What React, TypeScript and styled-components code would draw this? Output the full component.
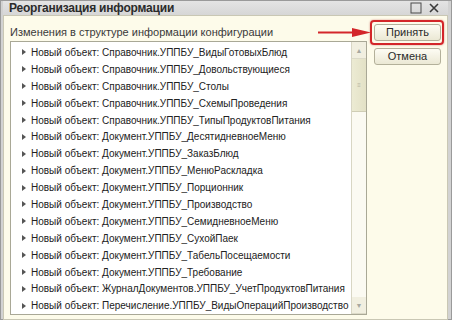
import * as React from 'react';
import styled, { createGlobalStyle } from 'styled-components';

const GlobalStyle = createGlobalStyle`
  html, body {
    margin: 0;
    padding: 0;
    background: #ffffff;
  }
  body {
    font-family: "Liberation Sans", Arial, sans-serif;
  }
`;

const items = [
  'Справочник.УППБУ_ВидыГотовыхБлюд',
  'Справочник.УППБУ_Довольствующиеся',
  'Справочник.УППБУ_Столы',
  'Справочник.УППБУ_СхемыПроведения',
  'Справочник.УППБУ_ТипыПродуктовПитания',
  'Документ.УППБУ_ДесятидневноеМеню',
  'Документ.УППБУ_ЗаказБлюд',
  'Документ.УППБУ_МенюРаскладка',
  'Документ.УППБУ_Порционник',
  'Документ.УППБУ_Производство',
  'Документ.УППБУ_СемидневноеМеню',
  'Документ.УППБУ_СухойПаек',
  'Документ.УППБУ_ТабельПосещаемости',
  'Документ.УППБУ_Требование',
  'ЖурналДокументов.УППБУ_УчетПродуктовПитания',
  'Перечисление.УППБУ_ВидыОперацийПроизводство',
];

const Window = styled.div`
  width: 452px;
  height: 320px;
  box-sizing: border-box;
  display: flex;
  flex-direction: column;
  background: #d2d2d2;
  border: 1px solid #9a9a9a;
  padding: 0 3px 5px 2px;
`;

const TitleBar = styled.div`
  height: 21px;
  display: flex;
  align-items: center;
  padding: 0 8px 0 6px;
  background: linear-gradient(#e4e4e4, #d6d6d6);
`;

const Title = styled.div`
  flex: 1;
  font-size: 12px;
  font-weight: bold;
  color: #2b2b2b;
  letter-spacing: -0.2px;
`;

const TitleIcons = styled.div`
  display: flex;
  gap: 6px;
  align-items: center;
`;

const Body = styled.div`
  flex: 1;
  display: flex;
  background: #fdfbea;
  border: 1px solid #c9c7b4;
  padding: 9px 6px 4px 6px;
  gap: 7px;
`;

const Main = styled.div`
  width: 358px;
  display: flex;
  flex-direction: column;
`;

const Caption = styled.div`
  font-size: 11px;
  color: #3a3a3a;
  height: 14px;
  line-height: 14px;
  margin-bottom: 2px;
`;

const ListBox = styled.div`
  flex: 1;
  display: flex;
  background: #ffffff;
  border: 1px solid #a9a896;
  overflow: hidden;
`;

const Rows = styled.div`
  flex: 1;
  min-width: 0;
  overflow: hidden;
  padding-top: 2px;
`;

const Row = styled.div`
  height: 16.9px;
  display: flex;
  align-items: center;
  padding-left: 11px;
  font-size: 10px;
  color: #222;
  white-space: nowrap;
`;

const Marker = styled.span`
  flex: none;
  width: 0;
  height: 0;
  border-top: 3px solid transparent;
  border-bottom: 3px solid transparent;
  border-left: 4px solid #555;
  margin-right: 5px;
`;

const ScrollBar = styled.div`
  width: 14px;
  display: flex;
  flex-direction: column;
  border-left: 1px solid #d8d6c4;
  background: #fbfaf2;
`;

const ScrollButton = styled.div`
  height: 16px;
  display: flex;
  align-items: center;
  justify-content: center;
  background: #f1efe0;
  border-bottom: 1px solid #dcdac8;
  font-size: 7px;
  color: #a8a8a0;
`;

const Thumb = styled.div`
  height: 52px;
  display: flex;
  align-items: center;
  justify-content: center;
  background: linear-gradient(90deg, #ecebd3, #e3e1c6);
  border-bottom: 1px solid #cfcdb5;
  font-size: 6px;
  color: #b5b39e;
`;

const Track = styled.div`
  flex: 1;
`;

const Side = styled.div`
  display: flex;
  flex-direction: column;
  gap: 7px;
  margin-top: -1px;
`;

const ButtonWrap = styled.div`
  position: relative;
`;

const Button = styled.button`
  width: 67px;
  height: 17px;
  padding: 0;
  font-family: "Liberation Sans", Arial, sans-serif;
  font-size: 11px;
  line-height: 13px;
  color: #2a2a2a;
  background: linear-gradient(#fdfcf4, #ebe8d4);
  border: 1px solid #b3b09a;
  border-radius: 3px;
  display: flex;
  align-items: center;
  justify-content: center;
`;

const Highlight = styled.div`
  position: absolute;
  left: -4px;
  top: -4px;
  right: -3px;
  bottom: -4px;
  border: 2px solid #d3262a;
  border-radius: 4px;
  box-shadow: 0 0 2px rgba(180, 20, 20, 0.5);
  pointer-events: none;
`;

const Arrow = styled.svg`
  position: absolute;
  left: -56px;
  top: 4px;
`;

export default function App() {
  return (
    <>
      <GlobalStyle />
      <Window>
        <TitleBar>
          <Title>Реорганизация информации</Title>
          <TitleIcons>
            <svg width="12" height="12" viewBox="0 0 12 12">
              <rect x="1" y="1" width="10" height="10" fill="none" stroke="#4a4a4a" strokeWidth="1" />
            </svg>
            <svg width="12" height="12" viewBox="0 0 12 12">
              <path d="M2 2 L10 10 M10 2 L2 10" stroke="#3a3a3a" strokeWidth="1.6" />
            </svg>
          </TitleIcons>
        </TitleBar>
        <Body>
          <Main>
            <Caption>Изменения в структуре информации конфигурации</Caption>
            <ListBox>
              <Rows>
                {items.map((name) => (
                  <Row key={name}>
                    <Marker />
                    Новый объект: {name}
                  </Row>
                ))}
              </Rows>
              <ScrollBar>
                <ScrollButton>▲</ScrollButton>
                <Thumb>≡</Thumb>
                <Track />
                <ScrollButton>▼</ScrollButton>
              </ScrollBar>
            </ListBox>
          </Main>
          <Side>
            <ButtonWrap>
              <Button>Принять</Button>
              <Highlight />
              <Arrow width="54" height="9" viewBox="0 0 54 9">
                <path d="M0 4.5 H38" stroke="#d3262a" strokeWidth="2" />
                <path d="M34 0 L53 4.5 L34 9 Z" fill="#d3262a" />
              </Arrow>
            </ButtonWrap>
            <Button>Отмена</Button>
          </Side>
        </Body>
      </Window>
    </>
  );
}
